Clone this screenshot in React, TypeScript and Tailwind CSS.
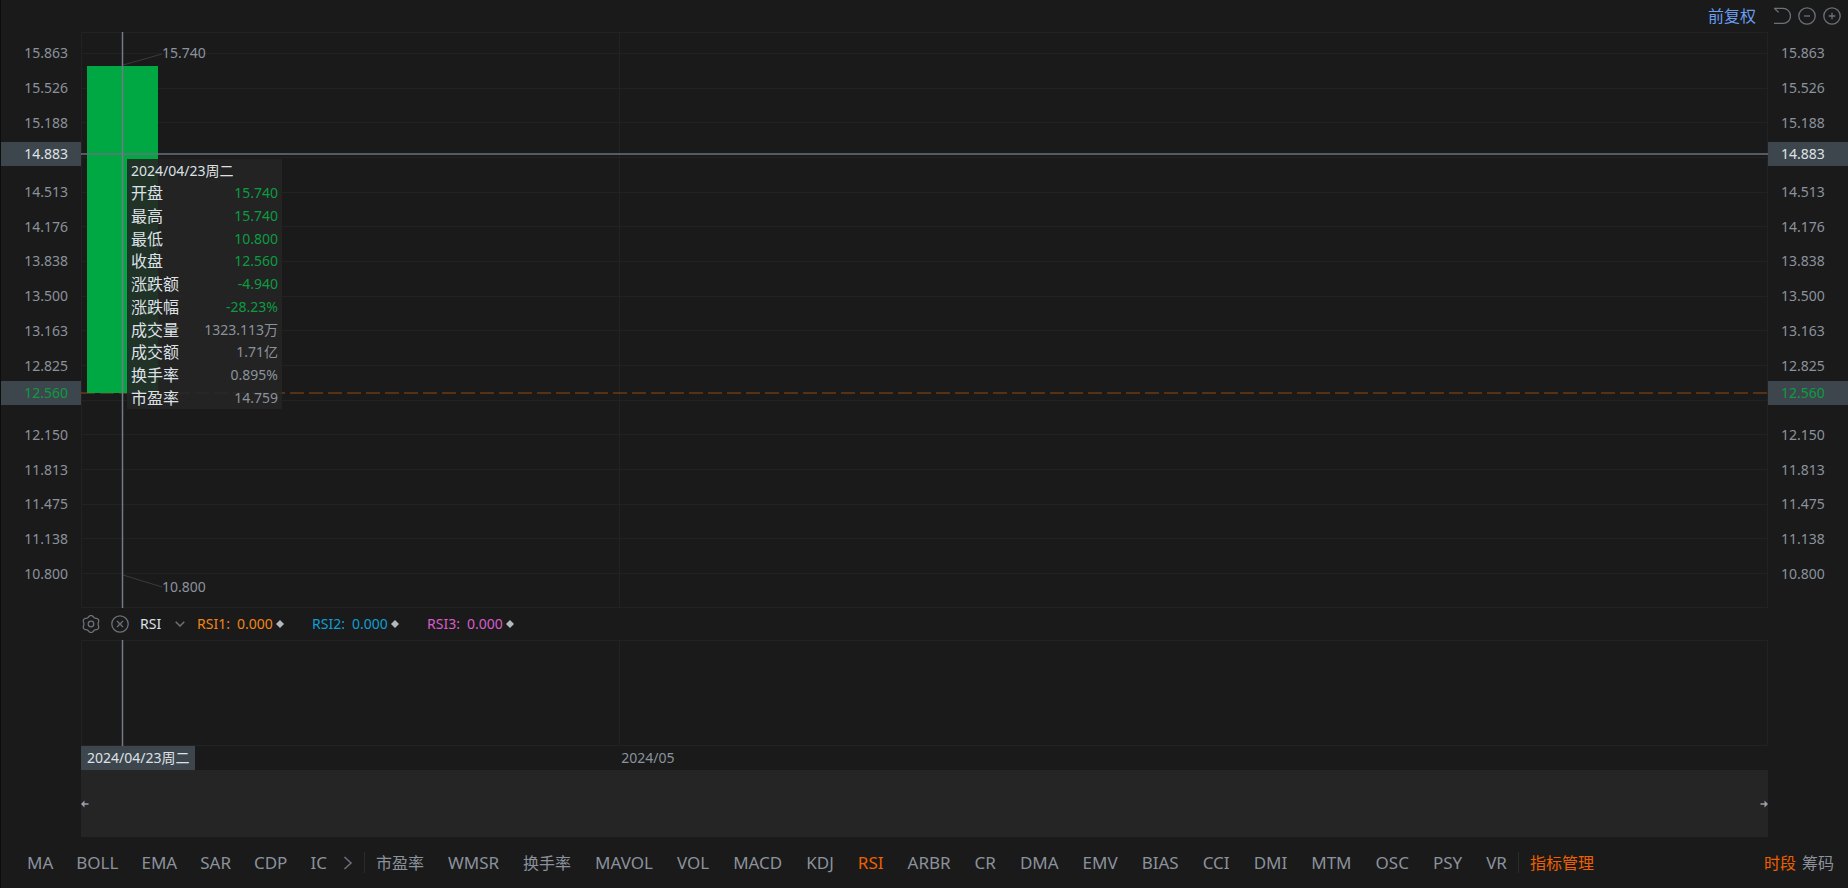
import React from "react";

const PRICES = [
  "15.863", "15.526", "15.188", "14.850", "14.513", "14.176", "13.838", "13.500",
  "13.163", "12.825", "12.488", "12.150", "11.813", "11.475", "11.138", "10.800",
];
const COVERED = ["14.850", "12.488"];
const GRID_TOP = 21;
const GRID_SPAN = 520;
const GRID_COLOR = "#222222";

const QUOTE = [
  { label: "开盘", value: "15.740", down: true },
  { label: "最高", value: "15.740", down: true },
  { label: "最低", value: "10.800", down: true },
  { label: "收盘", value: "12.560", down: true },
  { label: "涨跌额", value: "-4.940", down: true },
  { label: "涨跌幅", value: "-28.23%", down: true },
  { label: "成交量", value: "1323.113万", down: false },
  { label: "成交额", value: "1.71亿", down: false },
  { label: "换手率", value: "0.895%", down: false },
  { label: "市盈率", value: "14.759", down: false },
];

const RSI = [
  { name: "RSI1:", value: "0.000", color: "text-[#f08519]" },
  { name: "RSI2:", value: "0.000", color: "text-[#0f9fd2]" },
  { name: "RSI3:", value: "0.000", color: "text-[#d95cc8]" },
];

const MAIN_TABS = ["MA", "BOLL", "EMA", "SAR", "CDP", "IC"];
const SUB_TABS = [
  "市盈率", "WMSR", "换手率", "MAVOL", "VOL", "MACD", "KDJ", "RSI", "ARBR", "CR", "DMA",
  "EMV", "BIAS", "CCI", "DMI", "MTM", "OSC", "PSY", "VR",
];

// Six-lobed outline of the settings icon, centred on 9,9.
const GEAR_PATH =
  Array.from({ length: 72 }, (_, i) => {
    const a = (i * Math.PI) / 36;
    const r = 7.8 + 0.8 * Math.cos(6 * a);
    return `${i === 0 ? "M" : "L"}${(9 + r * Math.sin(a)).toFixed(2)} ${(9 - r * Math.cos(a)).toFixed(2)}`;
  }).join(" ") + " Z";

function Tab({ name, active = false }: { name: string; active?: boolean }) {
  const size = /^[A-Z]/.test(name) ? "text-[17px]" : "text-base";
  return (
    <button type="button" className={`${size} leading-6 ${active ? "text-[#ee6000]" : ""}`}>
      {name}
    </button>
  );
}

function PriceAxis({ side }: { side: "left" | "right" }) {
  const align = side === "left" ? "justify-end pr-[13px]" : "justify-start pl-[13px]";
  return (
    <div className="relative flex flex-col pt-1 pb-[17px]">
      {PRICES.map((p) => (
        <div key={p} className={`flex flex-1 items-center ${align}`}>
          {COVERED.includes(p) ? null : p}
        </div>
      ))}
      <div className={`absolute inset-x-0 top-[110px] flex h-6 items-center bg-[#3e464d] text-[#dfe3e8] ${align}`}>
        14.883
      </div>
      <div className={`absolute inset-x-0 top-[349px] flex h-6 items-center bg-[#3e464d] text-[#0b9c42] ${align}`}>
        12.560
      </div>
    </div>
  );
}

function PriceChart() {
  return (
    <div className="relative">
      <svg className="block h-full w-full" aria-label="K线图" role="img">
        <g stroke={GRID_COLOR} shapeRendering="crispEdges">
          {PRICES.map((p, i) => {
            const y = Math.round(GRID_TOP + (i * GRID_SPAN) / 15) + 0.5;
            return <line key={p} x1="0" x2="100%" y1={y} y2={y} />;
          })}
          <line x1="0" x2="100%" y1="0.5" y2="0.5" />
          <line x1="0" x2="100%" y1="575.5" y2="575.5" />
          <line x1="0.5" x2="0.5" y1="0" y2="100%" />
          <line x1="31.9%" x2="31.9%" y1="0" y2="100%" />
          <line x1="100%" x2="100%" y1="0" y2="100%" strokeWidth="2" />
        </g>
        <line x1="0" x2="100%" y1="361" y2="361" stroke="#8f4a12" strokeWidth="1.1" strokeDasharray="14 5" />
        <rect x="6" y="34" width="71" height="327" fill="#00a843" />
        <path d="M42 33 L81 22 M42 543 L81 555" stroke="#3a3a3a" fill="none" />
        <line x1="0" x2="100%" y1="122" y2="122" stroke="#6a727c" strokeWidth="1.5" />
        <line x1="41.5" x2="41.5" y1="0" y2="100%" stroke="#747a84" strokeWidth="1.5" />
        <g fill="#8b929c" fontSize="14">
          <text x="81" y="26">15.740</text>
          <text x="81" y="560">10.800</text>
        </g>
      </svg>
      <section className="absolute top-[127px] left-[46px] w-[155px] bg-[#252525]/90 px-1 pt-px text-[#dde1e6]">
        <h2 className="h-[22px] leading-[22px]">2024/04/23周二</h2>
        <dl className="flex h-[227px] flex-col">
          {QUOTE.map((q) => (
            <div key={q.label} className="flex flex-1 items-center justify-between leading-[22px]">
              <dt className="text-base leading-[22px]">{q.label}</dt>
              <dd className={q.down ? "text-[#0b9c42]" : "text-[#8b929c]"}>{q.value}</dd>
            </div>
          ))}
        </dl>
      </section>
    </div>
  );
}

export default function App() {
  return (
    <main className="min-h-screen border-l border-[#0d0d0d] bg-[#1a1a1a] font-['Noto_Sans','Noto_Sans_CJK_SC',sans-serif] text-sm text-[#8b929c]">
      <header className="flex h-8 items-center justify-end gap-[7px] pr-[7px]">
        <button type="button" className="mr-[10px] text-base text-[#6a9df0]">前复权</button>
        <button type="button" aria-label="还原">
          <svg width="18" height="18" viewBox="0 0 18 18" fill="none" stroke="#6a717a" strokeWidth="1.3">
            <path d="M5.6 5.4 L1.4 1.2 M1 1.4 H10 A7.3 7.3 0 0 1 10 16.4 H1" />
          </svg>
        </button>
        <button type="button" aria-label="缩小">
          <svg width="18" height="18" viewBox="0 0 18 18" fill="none" stroke="#6a717a" strokeWidth="1.3">
            <circle cx="9" cy="9" r="8.2" />
            <path d="M6 9 H12" />
          </svg>
        </button>
        <button type="button" aria-label="放大">
          <svg width="18" height="18" viewBox="0 0 18 18" fill="none" stroke="#6a717a" strokeWidth="1.3">
            <circle cx="9" cy="9" r="8.2" />
            <path d="M5.7 9 H12.3 M9 5.7 V12.3" />
          </svg>
        </button>
      </header>

      <div className="grid h-[576px] grid-cols-[80px_1fr_80px]">
        <PriceAxis side="left" />
        <PriceChart />
        <PriceAxis side="right" />
      </div>

      <div className="flex h-8 items-center pl-[81px]">
        <button type="button" aria-label="设置">
          <svg width="18" height="18" viewBox="0 0 18 18" fill="none" stroke="#6a717a" strokeWidth="1.3" strokeLinejoin="round">
            <path d={GEAR_PATH} />
            <circle cx="9" cy="9" r="2.8" />
          </svg>
        </button>
        <button type="button" aria-label="关闭" className="ml-[11px]">
          <svg width="18" height="18" viewBox="0 0 18 18" fill="none" stroke="#6a717a" strokeWidth="1.3">
            <circle cx="9" cy="9" r="8.2" />
            <path d="M6 6 L12 12 M12 6 L6 12" />
          </svg>
        </button>
        <button type="button" className="ml-[11px] flex w-[57px] items-center justify-between pr-3 text-[#dde1e6]">
          RSI
          <svg width="10" height="6" viewBox="0 0 10 6" fill="none" stroke="#6a717a" strokeWidth="1.5">
            <path d="M.7 .7 L5 5 L9.3 .7" />
          </svg>
        </button>
        {RSI.map((r) => (
          <div key={r.name} className={`flex w-[115px] items-center ${r.color}`}>
            <span>{r.name}</span>
            <span className="ml-[7px]">{r.value}</span>
            <svg className="ml-[3px]" width="8" height="8" viewBox="0 0 8 8" fill="#b4b8be">
              <path d="M4 0 L8 4 L4 8 L0 4 Z" />
            </svg>
          </div>
        ))}
      </div>

      <div className="mx-20">
        <svg className="block h-[106px] w-full" role="img" aria-label="RSI">
          <g stroke={GRID_COLOR} shapeRendering="crispEdges">
            <line x1="0" x2="100%" y1="0.5" y2="0.5" />
            <line x1="0" x2="100%" y1="105.5" y2="105.5" />
            <line x1="0.5" x2="0.5" y1="0" y2="100%" />
            <line x1="31.9%" x2="31.9%" y1="0" y2="100%" />
            <line x1="100%" x2="100%" y1="0" y2="100%" strokeWidth="2" />
          </g>
          <line x1="41.5" x2="41.5" y1="0" y2="100%" stroke="#747a84" strokeWidth="1.5" />
        </svg>
        <div className="grid h-6 grid-cols-[31.9%_1fr] items-center">
          <div className="flex">
            <time className="h-6 bg-[#3e464d] px-[6px] leading-6 text-[#dde1e6]">2024/04/23周二</time>
          </div>
          <time className="pl-0.5">2024/05</time>
        </div>
        <div className="flex h-[67px] items-center justify-between bg-[#252525]">
          <button type="button" aria-label="向左">
            <svg width="8" height="8" viewBox="0 0 8 8" fill="#9aa0a8">
              <path d="M0 4 L3.5 .5 V3.2 H7.5 V4.8 H3.5 V7.5 Z" />
            </svg>
          </button>
          <button type="button" aria-label="向右">
            <svg width="8" height="8" viewBox="0 0 8 8" fill="#9aa0a8">
              <path d="M8 4 L4.5 .5 V3.2 H.5 V4.8 H4.5 V7.5 Z" />
            </svg>
          </button>
        </div>
      </div>

      <nav className="flex h-[51px] items-center pr-[14px] pl-[26px] text-base whitespace-nowrap">
        <div className="flex items-center gap-[23px]">
          {MAIN_TABS.map((t) => (
            <Tab key={t} name={t} />
          ))}
        </div>
        <button type="button" aria-label="更多" className="ml-4">
          <svg width="10" height="14" viewBox="0 0 10 14" fill="none" stroke="#6a717a" strokeWidth="1.5">
            <path d="M1.5 1 L8 7 L1.5 13" />
          </svg>
        </button>
        <span className="mx-[11px] h-[21px] w-px bg-[#2b2b2b]" />
        <div className="flex items-center gap-6">
          {SUB_TABS.map((t) => (
            <Tab key={t} name={t} active={t === "RSI"} />
          ))}
        </div>
        <span className="mx-[11px] h-[21px] w-px bg-[#2b2b2b]" />
        <Tab name="指标管理" active />
        <div className="ml-auto flex gap-[6px]">
          <Tab name="时段" active />
          <Tab name="筹码" />
        </div>
      </nav>
    </main>
  );
}
